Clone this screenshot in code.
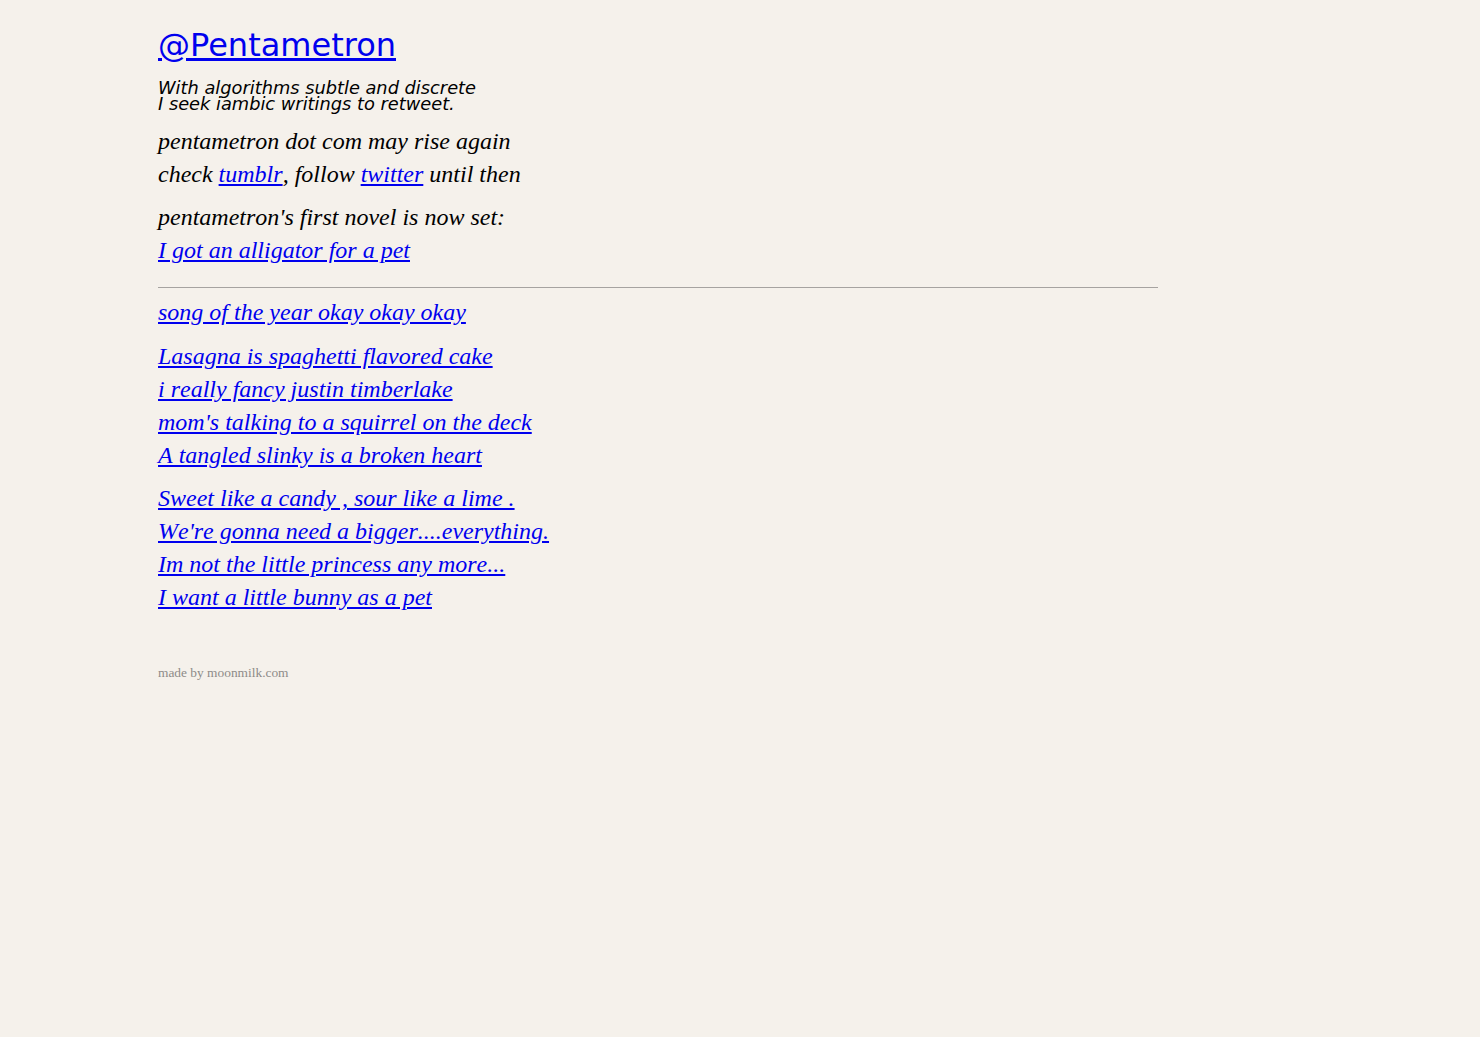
import React from "react";

const serif = "font-['Liberation_Serif','Times_New_Roman',serif] [font-kerning:none]";

export default function App() {
  const link = "text-[#0000ee] underline";
  return (
    <div className="min-h-[1037px] bg-[#f5f1eb] text-black">
      <div className="pl-[158px] pt-[27px]">
        <h1 className="font-['DejaVu_Sans',Verdana,sans-serif] text-[32px] leading-[37px] font-normal">
          <a href="#" className={link}>@Pentametron</a>
        </h1>
        <div className="mt-[16px] font-['DejaVu_Sans',Verdana,sans-serif] italic text-[17.8px] leading-[16px]">
          <div>With algorithms subtle and discrete</div>
          <div>I seek iambic writings to retweet.</div>
        </div>
        <div className={`${serif} italic text-[24px] leading-[33px]`}>
          <p className="mt-[13px]">
            pentametron dot com may rise again<br />
            check <a href="#" className={link}>tumblr</a>, follow <a href="#" className={link}>twitter</a> until then
          </p>
          <p className="mt-[10px]">
            pentametron's first novel is now set:<br />
            <a href="#" className={link}>I got an alligator for a pet</a>
          </p>
          <div className="mt-[20px] w-[1000px] h-px bg-[#a6a3a0]" />
          <p className="mt-[8px]">
            <a href="#" className={link}>song of the year okay okay okay</a>
          </p>
          <p className="mt-[11px]">
            <a href="#" className={link}>Lasagna is spaghetti flavored cake</a><br />
            <a href="#" className={link}>i really fancy justin timberlake</a><br />
            <a href="#" className={link}>mom's talking to a squirrel on the deck</a><br />
            <a href="#" className={link}>A tangled slinky is a broken heart</a>
          </p>
          <p className="mt-[10px]">
            <a href="#" className={link}>Sweet like a candy , sour like a lime .</a><br />
            <a href="#" className={link}>We're gonna need a bigger....everything.</a><br />
            <a href="#" className={link}>Im not the little princess any more...</a><br />
            <a href="#" className={link}>I want a little bunny as a pet</a>
          </p>
        </div>
        <div className={`${serif} mt-[51px] text-[13.4px] leading-[15px] text-[#8e8b88]`}>
          made by moonmilk.com
        </div>
      </div>
    </div>
  );
}
